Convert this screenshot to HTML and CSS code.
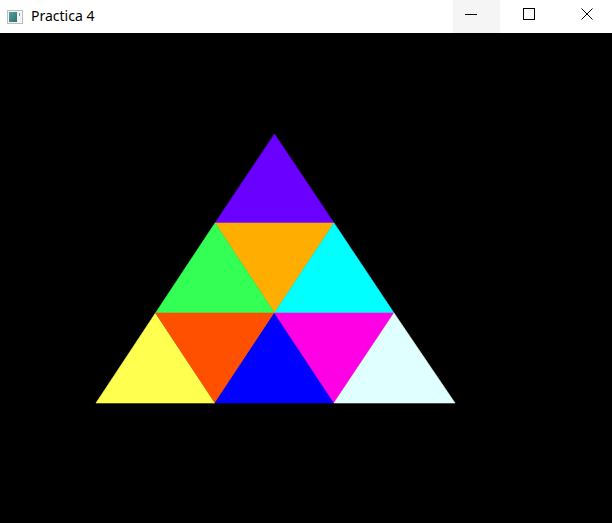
FILE: index.html
```html
<!DOCTYPE html>
<html>
<head>
<meta charset="utf-8">
<link rel="stylesheet" href="styles.css">
</head>
<body>
<div class="window">
  <div class="titlebar">
    <svg class="app-icon" width="16" height="14" viewBox="0 0 16 14">
      <rect x="0.5" y="0.5" width="15" height="13" fill="#f4f4f4" stroke="#b8c0c0"/>
      <defs><linearGradient id="g" x1="0" y1="0" x2="1" y2="1"><stop offset="0" stop-color="#5aa098"/><stop offset="1" stop-color="#2f6f78"/></linearGradient></defs>
      <rect x="2" y="2" width="8" height="10" fill="url(#g)"/>
      <rect x="12" y="3" width="1" height="3" fill="#8a9a9a"/>
    </svg>
    <span class="title">Practica 4</span>
    <div class="spacer"></div>
    <div class="controls">
      <div class="btn btn-min"><svg width="12" height="12" viewBox="0 0 12 12"><path d="M0 6.5H12" stroke="#000" stroke-width="1"/></svg></div>
      <div class="btn btn-max"><svg width="12" height="12" viewBox="0 0 12 12"><rect x="0.5" y="0.5" width="11" height="11" fill="none" stroke="#000"/></svg></div>
      <div class="btn btn-close"><svg width="12" height="12" viewBox="0 0 12 12"><path d="M0.5 0.5L11.5 11.5M11.5 0.5L0.5 11.5" stroke="#000" stroke-width="1"/></svg></div>
    </div>
  </div>
  <div class="canvas">
    <svg width="612" height="490" viewBox="0 0 612 490">
      <g class="tris">
        <polygon points="274.5,101 215,190 334,190" fill="#6a00ff" stroke="#6a00ff"/>
        <polygon points="215,190 334,190 274.5,280" fill="#ffae00" stroke="#ffae00"/>
        <polygon points="215,190 155.5,280 274.5,280" fill="#33ff55" stroke="#33ff55"/>
        <polygon points="334,190 274.5,280 394,280" fill="#00ffff" stroke="#00ffff"/>
        <polygon points="155.5,280 96,370 215,370" fill="#ffff50" stroke="#ffff50"/>
        <polygon points="155.5,280 274.5,280 215,370" fill="#ff5000" stroke="#ff5000"/>
        <polygon points="274.5,280 215,370 334,370" fill="#0000ff" stroke="#0000ff"/>
        <polygon points="274.5,280 394,280 334,370" fill="#ff00e4" stroke="#ff00e4"/>
        <polygon points="394,280 334,370 455,370" fill="#e0ffff" stroke="#e0ffff"/>
      </g>
    </svg>
  </div>
</div>
</body>
</html>
```
FILE: styles.css
```css
html, body {
  margin: 0;
  padding: 0;
  background: #000;
}
.window {
  width: 612px;
  height: 523px;
  display: flex;
  flex-direction: column;
  overflow: hidden;
}
.titlebar {
  height: 33px;
  background: #fff;
  display: flex;
  align-items: center;
  flex: none;
}
.app-icon {
  margin-left: 7px;
  margin-right: 8px;
  display: block;
}
.title {
  font-family: "Noto Sans", "Open Sans", sans-serif;
  font-size: 14px;
  color: #000;
  position: relative;
  top: -1px;
}
.spacer {
  flex: 1;
}
.controls {
  display: flex;
  height: 33px;
}
.btn {
  height: 33px;
  display: flex;
  align-items: center;
  justify-content: center;
}
.btn svg {
  display: block;
  margin-top: -5px;
}
.btn-min {
  width: 47px;
  background: #f5f5f5;
  justify-content: flex-start;
  padding-left: 12px;
  box-sizing: border-box;
}
.btn-max {
  width: 57px;
}
.btn-close {
  width: 55px;
  padding-left: 5px;
  box-sizing: border-box;
}
.canvas {
  flex: 1;
  background: #000;
}
.canvas svg {
  display: block;
}
.tris polygon {
  stroke-width: 0.6;
  stroke-linejoin: miter;
}
```
